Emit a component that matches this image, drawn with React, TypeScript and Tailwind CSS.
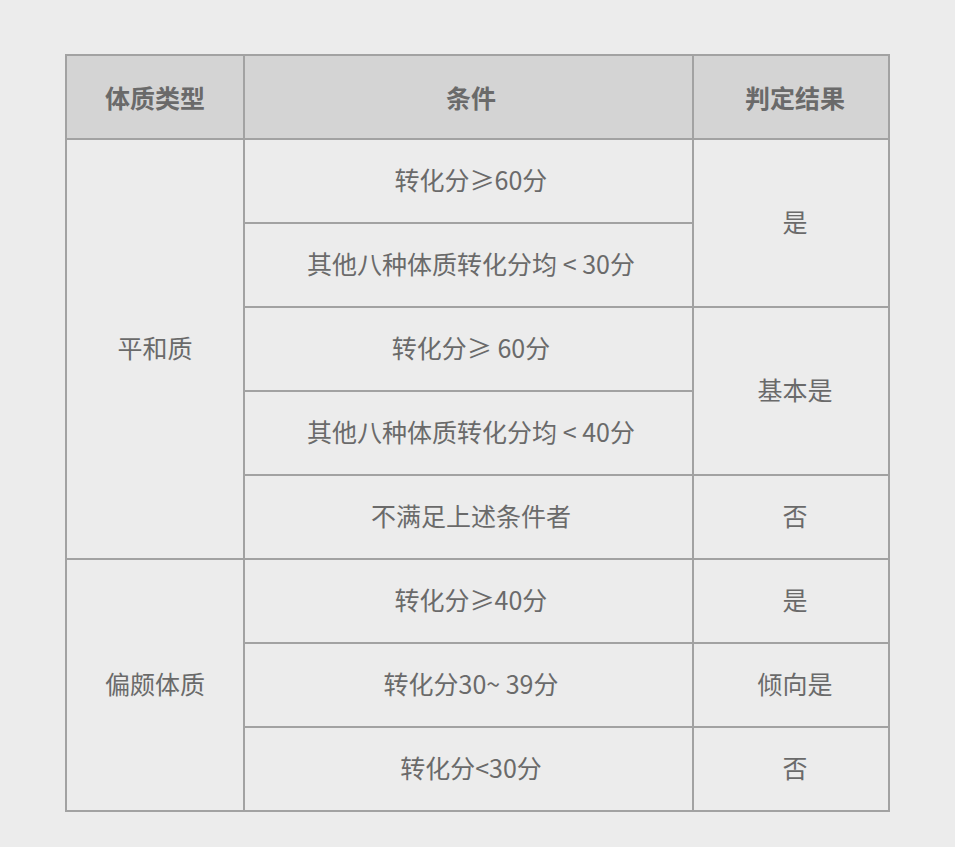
const rows: { cond: string; type?: { label: string; span: number }; result?: { label: string; span: number } }[] = [
  { cond: "转化分≥60分", type: { label: "平和质", span: 5 }, result: { label: "是", span: 2 } },
  { cond: "其他八种体质转化分均 < 30分" },
  { cond: "转化分≥ 60分", result: { label: "基本是", span: 2 } },
  { cond: "其他八种体质转化分均 < 40分" },
  { cond: "不满足上述条件者", result: { label: "否", span: 1 } },
  { cond: "转化分≥40分", type: { label: "偏颇体质", span: 3 }, result: { label: "是", span: 1 } },
  { cond: "转化分30~ 39分", result: { label: "倾向是", span: 1 } },
  { cond: "转化分<30分", result: { label: "否", span: 1 } },
];

const cell = "border-2 border-[#a2a2a2] text-center align-middle p-0";

export default function App() {
  return (
    <div
      className="min-h-[847px] w-[955px] bg-[#ececec] pt-[54px] pl-[65px]"
      style={{ fontFamily: '"Noto Sans CJK SC", "Noto Sans", sans-serif' }}
    >
      <table className="w-[823px] table-fixed border-collapse text-[25px] leading-none text-[#6a6a6a]">
        <colgroup>
          <col className="w-[178px]" />
          <col className="w-[449px]" />
          <col className="w-[196px]" />
        </colgroup>
        <thead>
          <tr className="h-[84px] bg-[#d4d4d4]">
            <th className={`${cell} font-bold`}>体质类型</th>
            <th className={`${cell} pl-[5px] font-bold`}>条件</th>
            <th className={`${cell} pl-[8px] font-bold`}>判定结果</th>
          </tr>
        </thead>
        <tbody className="bg-[#ececec]">
          {rows.map((r, i) => (
            <tr key={i} className="h-[84px]">
              {r.type && (
                <td rowSpan={r.type.span} className={`${cell} pb-[3px]`}>
                  {r.type.label}
                </td>
              )}
              <td className={`${cell} pl-[5px] pb-[3px]`}>{r.cond}</td>
              {r.result && (
                <td rowSpan={r.result.span} className={`${cell} pl-[8px] pb-[3px]`}>
                  {r.result.label}
                </td>
              )}
            </tr>
          ))}
        </tbody>
      </table>
    </div>
  );
}
